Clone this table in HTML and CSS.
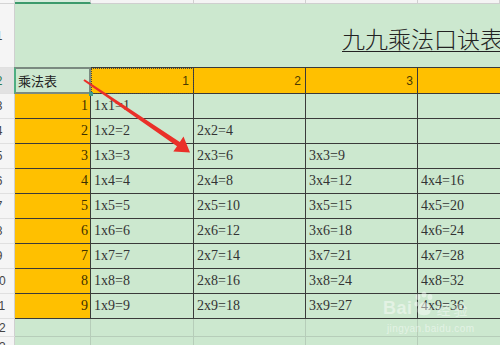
FILE: index.html
```html
<!DOCTYPE html>
<html lang="zh-CN">
<head>
<meta charset="utf-8">
<title>九九乘法口诀表</title>
<link rel="stylesheet" href="styles.css">
</head>
<body>
<div class="sheet">
  <!-- column header strip -->
  <div class="cell corner"></div>
  <div class="cell ch ch-sel"></div>
  <div class="cell ch"></div>
  <div class="cell ch"></div>
  <div class="cell ch"></div>
  <div class="cell ch last"></div>

  <!-- row 1 title -->
  <div class="cell rh"><span>1</span></div>
  <div class="cell title"><span class="title-text">九九乘法口诀表</span></div>

  <!-- row 2 header -->
  <div class="cell rh rh-sel"><span>2</span></div>
  <div class="cell t sel"><span class="lbl">乘法表</span></div>
  <div class="cell t o hn ants">1</div>
  <div class="cell t o hn">2</div>
  <div class="cell t o hn">3</div>
  <div class="cell t o hn last"></div>

  <div class="cell rh"><span>3</span></div>
  <div class="cell t o num">1</div>
  <div class="cell t f">1x1=1</div>
  <div class="cell t f"></div>
  <div class="cell t f"></div>
  <div class="cell t f last"></div>

  <div class="cell rh"><span>4</span></div>
  <div class="cell t o num">2</div>
  <div class="cell t f">1x2=2</div>
  <div class="cell t f">2x2=4</div>
  <div class="cell t f"></div>
  <div class="cell t f last"></div>

  <div class="cell rh"><span>5</span></div>
  <div class="cell t o num">3</div>
  <div class="cell t f">1x3=3</div>
  <div class="cell t f">2x3=6</div>
  <div class="cell t f">3x3=9</div>
  <div class="cell t f last"></div>

  <div class="cell rh"><span>6</span></div>
  <div class="cell t o num">4</div>
  <div class="cell t f">1x4=4</div>
  <div class="cell t f">2x4=8</div>
  <div class="cell t f">3x4=12</div>
  <div class="cell t f last">4x4=16</div>

  <div class="cell rh"><span>7</span></div>
  <div class="cell t o num">5</div>
  <div class="cell t f">1x5=5</div>
  <div class="cell t f">2x5=10</div>
  <div class="cell t f">3x5=15</div>
  <div class="cell t f last">4x5=20</div>

  <div class="cell rh"><span>8</span></div>
  <div class="cell t o num">6</div>
  <div class="cell t f">1x6=6</div>
  <div class="cell t f">2x6=12</div>
  <div class="cell t f">3x6=18</div>
  <div class="cell t f last">4x6=24</div>

  <div class="cell rh"><span>9</span></div>
  <div class="cell t o num">7</div>
  <div class="cell t f">1x7=7</div>
  <div class="cell t f">2x7=14</div>
  <div class="cell t f">3x7=21</div>
  <div class="cell t f last">4x7=28</div>

  <div class="cell rh"><span>10</span></div>
  <div class="cell t o num">8</div>
  <div class="cell t f">1x8=8</div>
  <div class="cell t f">2x8=16</div>
  <div class="cell t f">3x8=24</div>
  <div class="cell t f last">4x8=32</div>

  <div class="cell rh"><span>11</span></div>
  <div class="cell t o num">9</div>
  <div class="cell t f">1x9=9</div>
  <div class="cell t f">2x9=18</div>
  <div class="cell t f">3x9=27</div>
  <div class="cell t f last">4x9=36</div>

  <div class="cell rh"><span>12</span></div>
  <div class="cell"></div>
  <div class="cell"></div>
  <div class="cell"></div>
  <div class="cell"></div>
  <div class="cell last"></div>

  <div class="cell rh"><span>13</span></div>
  <div class="cell"></div>
  <div class="cell"></div>
  <div class="cell"></div>
  <div class="cell"></div>
  <div class="cell last"></div>

  <svg class="arrow" width="500" height="345" viewBox="0 0 500 345">
    <polygon fill="#ea3029" points="84.6,79.2 179.8,142 183.5,136.6 190,152.5 173.3,151.6 177,146.2 83.4,80.8"/>
  </svg>

  <div class="wm">
    <div class="wm-top">
      <span class="wm-bai">Bai</span>
      <svg class="wm-paw" width="20" height="26" viewBox="0 0 20 26">
        <ellipse cx="4" cy="6" rx="2.4" ry="3" fill="#fff"/>
        <ellipse cx="10" cy="3.5" rx="2.4" ry="3" fill="#fff"/>
        <ellipse cx="16" cy="6" rx="2.4" ry="3" fill="#fff"/>
        <ellipse cx="2.5" cy="13" rx="2.2" ry="2.6" fill="#fff"/>
        <path d="M10 11 C14 11 18 18 16 22 C14 25 6 25 4 22 C2 18 6 11 10 11 Z" fill="#fff"/>
      </svg>
      <span class="wm-jy">经验</span>
    </div>
    <div class="wm-url">jingyan.baidu.com</div>
  </div>
</div>
</body>
</html>
```
FILE: styles.css
```css
html, body {
  margin: 0;
  padding: 0;
}
body {
  width: 500px;
  height: 345px;
  overflow: hidden;
  background: #cce8cf;
}
.sheet {
  position: relative;
  display: grid;
  grid-template-columns: 15px 76px 103px 112px 112px 82px;
  grid-template-rows: 4px 64px 26px repeat(9, 25px) 18px 20px;
  width: 500px;
  height: 345px;
  overflow: hidden;
}
.cell {
  box-sizing: border-box;
  display: flex;
  align-items: center;
  min-width: 0;
  background: #cce8cf;
  border-right: 1px solid #b6cdb9;
  border-bottom: 1px solid #b6cdb9;
  white-space: nowrap;
  overflow: hidden;
}
.last {
  border-right: none;
}
.corner {
  background: #f6f6f6;
  border-right: 1px solid #d4d4d4;
  border-bottom: 1px solid #d4d4d4;
}
.ch {
  background: #f4f4f4;
  border-right: 1px solid #d0d0d0;
  border-bottom: 1px solid #cfcfcf;
}
.ch-sel {
  background: #d8ecdd;
  border-bottom: 2px solid #3c9a6c;
}
.rh {
  background: #f5f5f5;
  border-right: 1px solid #d0d0d0;
  border-bottom: 1px solid #e0e0e0;
  font: 12px "Liberation Sans", Arial, sans-serif;
  color: #444;
}
.rh span {
  display: block;
  flex: none;
  width: 28px;
  margin-left: -15px;
  text-align: center;
}
.rh-sel {
  background: #e2e2e2;
  color: #2a7a50;
}
.title {
  grid-column: span 5;
  border-right: none;
  border-bottom: 1px solid #3a3a3a;
  padding-left: 327px;
  padding-top: 4px;
}
.title-text {
  font-family: "Noto Sans CJK SC", sans-serif;
  font-size: 23px;
  font-weight: 300;
  color: #222;
  text-decoration: underline;
  text-decoration-thickness: 1px;
  text-underline-offset: 3px;
}
.t {
  border-right-color: #3a3a3a;
  border-bottom-color: #3a3a3a;
}
.o {
  background: #ffc000;
}
.num {
  justify-content: flex-end;
  padding-right: 2px;
  font: 14px "Liberation Serif", "Times New Roman", serif;
  color: #3d3000;
}
.hn {
  justify-content: flex-end;
  padding-right: 4px;
  font: 12px "Liberation Sans", Arial, sans-serif;
  color: #4a3a00;
}
.f {
  padding-left: 3px;
  font: 14px "Liberation Serif", "Times New Roman", serif;
  color: #333;
}
.sel {
  position: relative;
  overflow: visible;
  z-index: 2;
}
.sel::after {
  content: "";
  position: absolute;
  left: -1px;
  top: -1px;
  right: -1px;
  bottom: -1px;
  border: 2px solid #7a8a80;
  border-left-color: #4fae82;
}
.sel::before {
  content: "";
  position: absolute;
  right: -3px;
  bottom: -3px;
  width: 4px;
  height: 4px;
  background: #3d9c8c;
  z-index: 3;
}
.lbl {
  padding-left: 3px;
  font: 13px "Noto Sans CJK SC", sans-serif;
  color: #222;
}
.ants {
  position: relative;
  overflow: visible;
}
.ants::after {
  content: "";
  position: absolute;
  left: 0;
  top: 0;
  right: -1px;
  bottom: -1px;
  border: 1px dotted #444;
}
.arrow {
  position: absolute;
  left: 0;
  top: 0;
  z-index: 5;
  pointer-events: none;
}
.wm {
  position: absolute;
  left: 383px;
  top: 290px;
  z-index: 6;
  opacity: 0.45;
  color: #fff;
  pointer-events: none;
}
.wm-top {
  display: flex;
  align-items: flex-end;
  gap: 1px;
  height: 27px;
}
.wm-bai {
  font: bold 18px "Liberation Sans", Arial, sans-serif;
  line-height: 18px;
  letter-spacing: 0.5px;
}
.wm-paw {
  display: block;
}
.wm-jy {
  font: 14px "Noto Sans CJK SC", sans-serif;
  line-height: 16px;
  letter-spacing: 3px;
  margin-left: 2px;
}
.wm-url {
  margin-top: 6px;
  margin-left: 4px;
  font: 10px "Liberation Sans", Arial, sans-serif;
  letter-spacing: 0.4px;
}
```
